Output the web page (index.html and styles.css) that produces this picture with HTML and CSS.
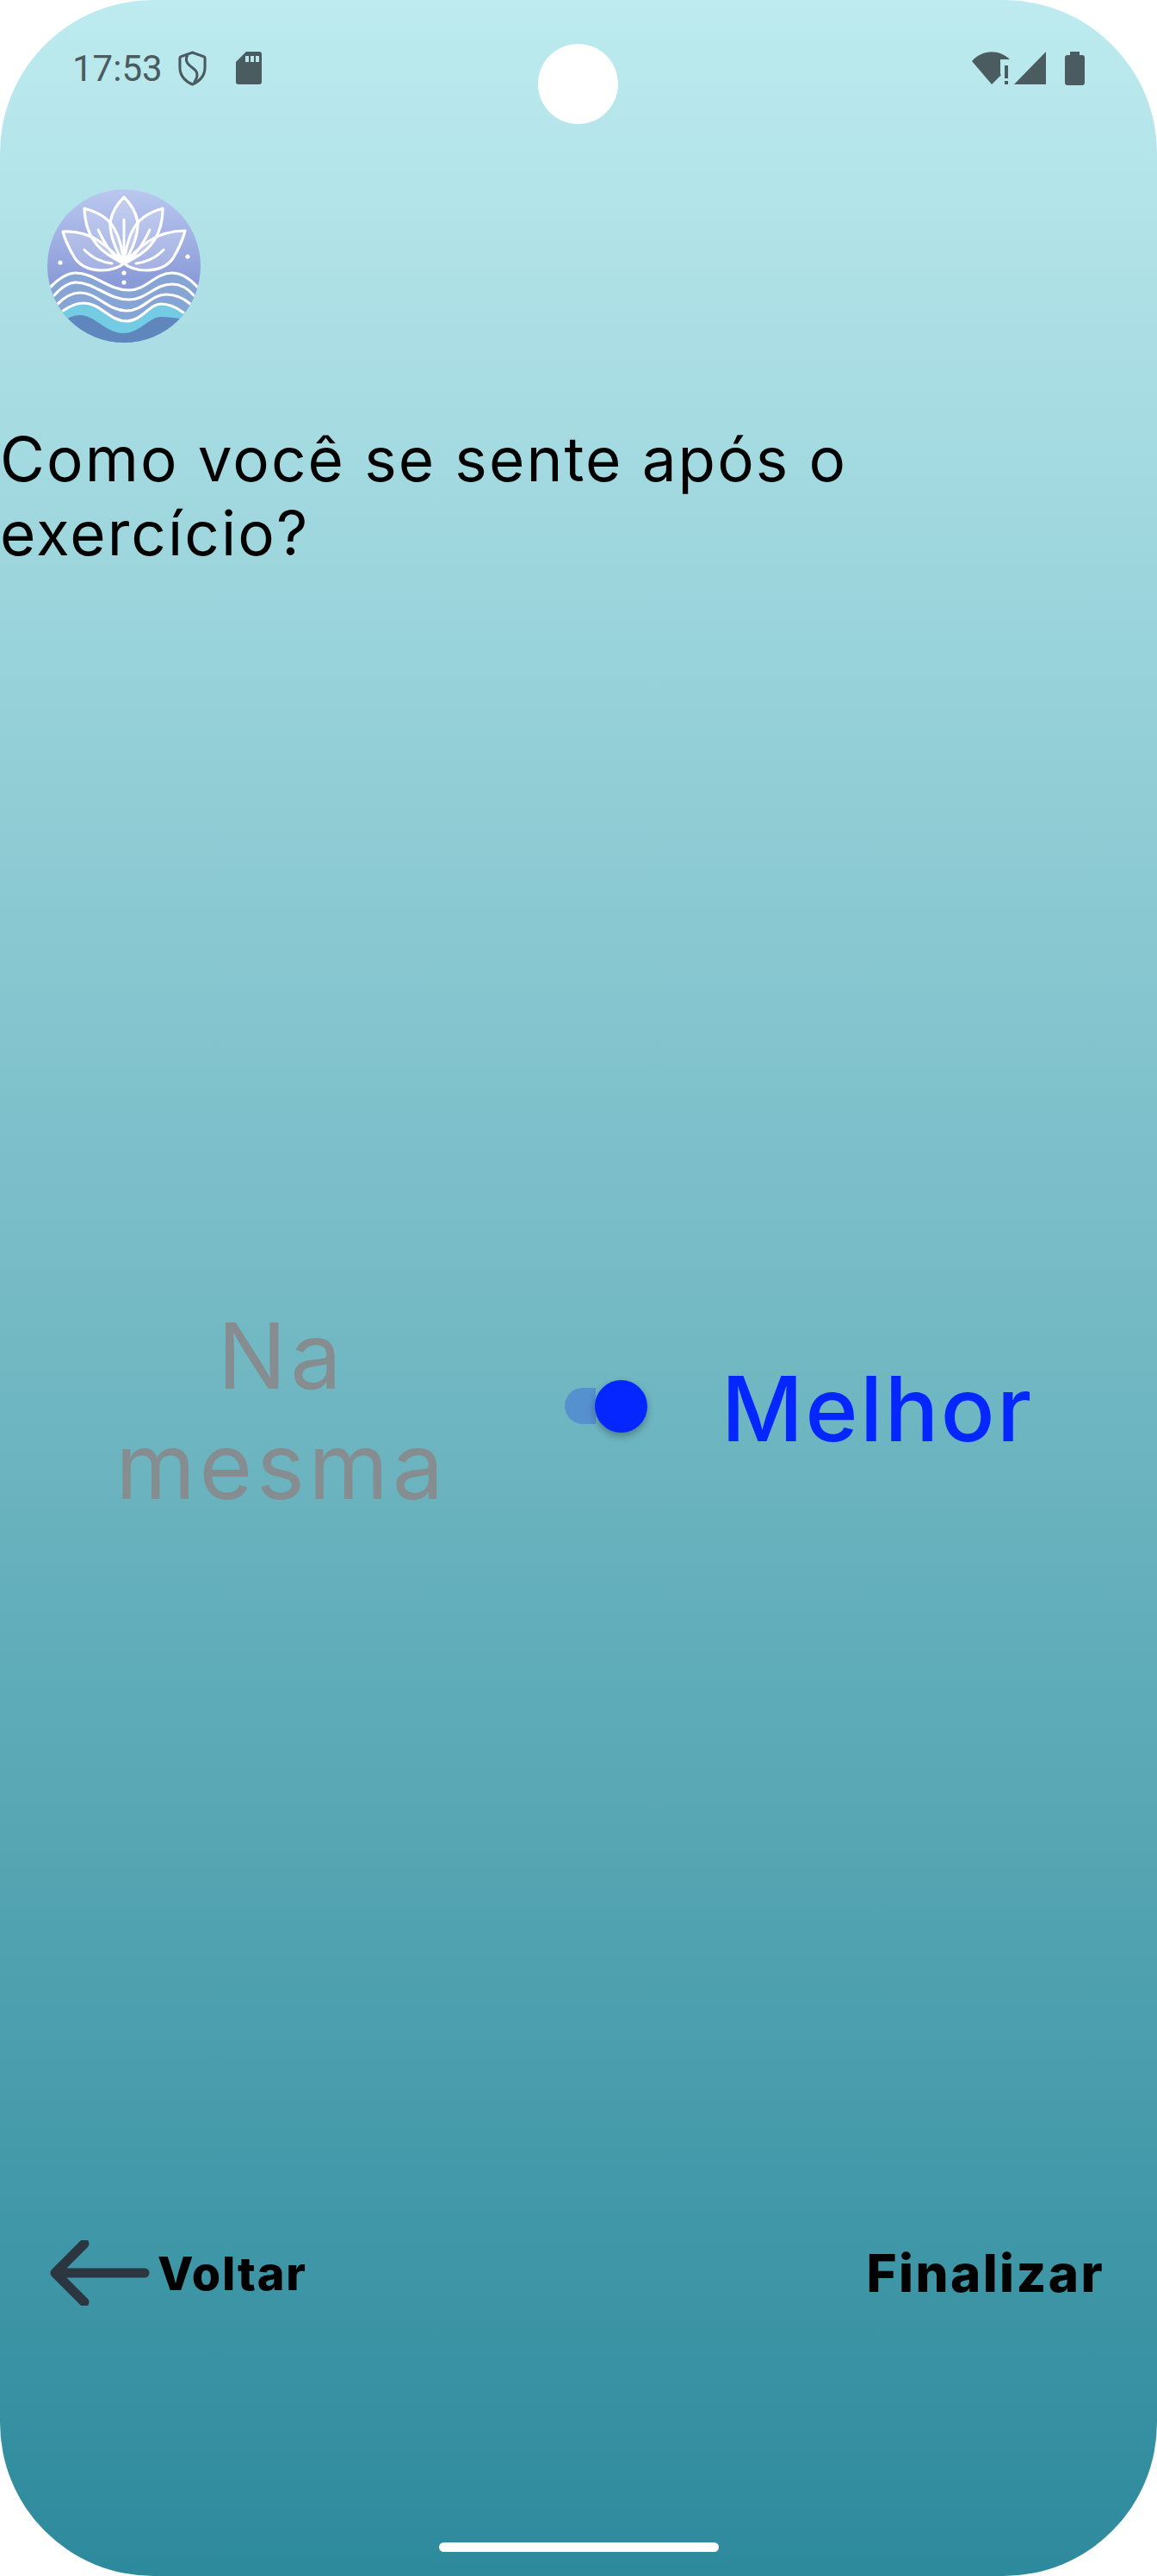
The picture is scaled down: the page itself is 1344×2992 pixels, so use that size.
FILE: index.html
```html
<!DOCTYPE html>
<html lang="en">
<head>
  <meta charset="UTF-8" />
  <title>Como você se sente</title>
  <link rel="stylesheet" href="styles.css">
</head>
<body>
  <div class="screen">
    <div class="camera"></div>

    <div class="status-bar">
      <div class="status-left">
        <span class="time">17:53</span>
        <svg class="shield" viewBox="0 0 34 42"><path d="M17 2 L31 7 Q32 7.500 32 9 V20 C32 30 25 37 17 40 C9 37 2 30 2 20 V9 Q2 7.500 3 7 Z" fill="none" stroke="#4a5c60" stroke-width="3.200" stroke-linejoin="round"/><path d="M11 5 C7 13 13 17 18 21 C24 25 24 31 19 38" fill="none" stroke="#4a5c60" stroke-width="3.200"/></svg>
        <svg class="sdcard" viewBox="0 0 30 38"><path d="M12 0 H27 Q30 0 30 3 V35 Q30 38 27 38 H3 Q0 38 0 35 V12 Z" fill="#4a5c60"/><path d="M11 5h4v7h-4zM17 5h4v7h-4zM23 5h4v7h-4z" fill="#bae8ec"/></svg>
      </div>
      <div class="status-right">
        <svg class="wifi" viewBox="0 0 44 38"><path d="M0 11 C12 -3 32 -3 44 9 L33 9 V26 L34 27 L23 38 Z" fill="#4a5c60"/><path d="M38 16h4v15h-4zM38 34h4v4h-4z" fill="#4a5c60"/></svg>
        <svg class="signal" viewBox="0 0 37 38"><path d="M37 0 V38 H0 Z" fill="#4a5c60"/></svg>
        <svg class="battery" viewBox="0 0 23 39"><path d="M6 0 H17 V4 H20 Q23 4 23 7 V36 Q23 39 20 39 H3 Q0 39 0 36 V7 Q0 4 3 4 H6 Z" fill="#4a5c60"/></svg>
      </div>
    </div>

    <svg class="logo" viewBox="0 0 178 178">
      <defs>
        <linearGradient id="disc" x1="0" y1="0" x2="0" y2="1">
          <stop offset="0" stop-color="#bac8ef"/>
          <stop offset="0.6" stop-color="#8b9bd8"/>
          <stop offset="1" stop-color="#7f9ccf"/>
        </linearGradient>
        <clipPath id="round"><circle cx="89" cy="89" r="89"/></clipPath>
      </defs>
      <circle cx="89" cy="89" r="89" fill="url(#disc)"/>
      <g clip-path="url(#round)">
        <path d="M4 113 C15 102 24 97 33 97 C55 97 70 117 95 117 C115 117 125 97 145 97 C155 97 165 103 174 113 L178 178 H0 Z" fill="#86a4d4"/>
        <path d="M18 141 C27 135 34 132 42 132 C62 132 72 153 92 153 C110 153 118 133 132 133 C142 133 150 137 158 143 L160 178 H10 Z" fill="#74cbe4"/>
        <path d="M25 149 C30 147 34 146 38 146 C55 146 68 167 88 167 C108 167 118 148 132 148 C140 148 147 149 153 150 L170 178 H8 Z" fill="#5f86bd"/>
        <g fill="none" stroke="#fff" stroke-width="3.200" stroke-linecap="round">
          <path d="M4 113 C15 102 24 97 33 97 C55 97 70 117 95 117 C115 117 125 97 145 97 C155 97 165 103 174 113"/>
          <path d="M8 123 C17 113 25 108 33 108 C55 108 70 128 95 128 C115 128 125 110 145 110 C155 110 163 115 170 123"/>
          <path d="M12 133 C20 125 29 120 38 120 C58 120 70 141 92 141 C112 141 120 122 138 122 C148 122 158 126 166 133"/>
          <path d="M18 141 C27 135 34 132 42 132 C62 132 72 153 92 153 C110 153 118 133 132 133 C142 133 150 137 158 143"/>
        </g>
        <g fill="rgba(255,255,255,0.18)" stroke="#fff" stroke-width="3.200" stroke-linejoin="round">
          <path d="M89 86 C75 97 45 98 32 80 C26 70 21 60 18 49 C35 48 48 52 60 60 C70 67 82 78 89 86 Z"/>
          <path d="M89 86 C103 97 133 98 146 80 C152 70 157 60 160 48 C143 48 130 52 118 60 C108 67 96 78 89 86 Z"/>
          <path d="M89 86 C65 75 44 60 43 22 C58 26 72 34 78 46 C85 58 87 72 89 86 Z"/>
          <path d="M89 86 C113 75 134 60 134 22 C120 26 106 34 100 46 C93 58 91 72 89 86 Z"/>
          <path d="M89 86 C78 68 73 52 73 40 C74 28 81 17 89 9 C97 17 104 28 105 40 C105 52 100 68 89 86 Z"/>
        </g>
        <g fill="none" stroke="#fff" stroke-width="3" stroke-linecap="round">
          <path d="M89 35 V85"/>
          <path d="M59 47 C65 60 72 72 84 84"/>
          <path d="M119 47 C113 60 106 72 94 84"/>
          <path d="M43 70 C52 80 65 85 75 86"/>
          <path d="M135 70 C126 80 113 85 103 86"/>
        </g>
        <g fill="#fff">
          <circle cx="15" cy="85" r="2.600"/><circle cx="163" cy="78" r="2.600"/>
          <circle cx="89" cy="97" r="2.600"/><circle cx="89" cy="108" r="2.600"/>
        </g>
      </g>
    </svg>

    <h1 class="question">Como você se sente após o exercício?</h1>

    <div class="choice">
      <div class="option-off">Na mesma</div>
      <div class="switch">
        <div class="switch-track"></div>
        <div class="switch-thumb"></div>
      </div>
      <div class="option-on">Melhor</div>
    </div>

    <div class="footer">
      <div class="back">
        <svg class="arrow" viewBox="0 0 116 76"><path d="M40 4 L6 38 L40 72 M6 38 H110" fill="none" stroke="#2b3640" stroke-width="11" stroke-linecap="round" stroke-linejoin="round"/></svg>
        <span class="back-label">Voltar</span>
      </div>
      <span class="finish">Finalizar</span>
    </div>

    <div class="home-bar"></div>
  </div>
</body>
</html>
```

FILE: styles.css
```css
html, body {
  margin: 0;
  padding: 0;
  background: #fff;
}

.screen {
  position: relative;
  width: 1344px;
  height: 2992px;
  box-sizing: border-box;
  border-radius: 178px;
  overflow: hidden;
  background: linear-gradient(to bottom, #bdebef 0%, #2d8a9c 100%);
  font-family: Inter, "Noto Sans", sans-serif;
  display: flex;
  flex-direction: column;
}

.camera {
  position: absolute;
  left: 625px;
  top: 51px;
  width: 93px;
  height: 93px;
  border-radius: 50%;
  background: #fff;
}

.status-bar {
  display: flex;
  justify-content: space-between;
  align-items: center;
  height: 40px;
  margin-top: 59px;
  padding: 0 84px;
}

.status-left,
.status-right {
  display: flex;
  align-items: center;
}

.time {
  font-family: Roboto, sans-serif;
  font-size: 42px;
  color: #4a5c60;
  width: 123px;
}

.shield {
  width: 33px;
  height: 41px;
  margin-right: 34px;
}

.sdcard {
  width: 30px;
  height: 38px;
}

.wifi {
  width: 44px;
  height: 38px;
}

.signal {
  width: 37px;
  height: 38px;
  margin-left: 5px;
  margin-right: 22px;
}

.battery {
  width: 23px;
  height: 39px;
}

.logo {
  display: block;
  width: 178px;
  height: 178px;
  margin: 121px 0 0 55px;
}

.question {
  margin: 92px 0 0 0;
  width: 1040px;
  font-size: 71px;
  font-weight: 400;
  letter-spacing: 2.100px;
  line-height: 86px;
  color: #000;
}

.choice {
  display: flex;
  align-items: center;
  margin-top: 849px;
}

.option-off {
  width: 400px;
  margin-left: 127px;
  text-align: center;
  font-size: 106px;
  font-weight: 400;
  letter-spacing: 4.500px;
  line-height: 128px;
  color: #868d90;
}

.switch {
  position: relative;
  width: 96px;
  height: 61px;
  margin-left: 129px;
  margin-bottom: 12px;
  display: flex;
  align-items: center;
}

.switch-track {
  width: 36px;
  height: 42px;
  border-radius: 21px 0 0 21px;
  background: #5590cf;
}

.switch-thumb {
  position: absolute;
  left: 35px;
  top: 0;
  width: 61px;
  height: 61px;
  border-radius: 50%;
  background: #0526ff;
  box-shadow: 0 4px 8px rgba(0, 0, 0, 0.3);
}

.option-on {
  margin-left: 86px;
  margin-bottom: 6px;
  font-size: 104px;
  font-weight: 500;
  letter-spacing: 2.500px;
  color: #0526ff;
}

.footer {
  display: flex;
  justify-content: space-between;
  align-items: center;
  margin-top: 835px;
  padding: 0 61px 0 58px;
}

.back {
  display: flex;
  align-items: center;
}

.arrow {
  width: 116px;
  height: 76px;
}

.back-label {
  margin-left: 9px;
  font-size: 54px;
  font-weight: 800;
  letter-spacing: 1.800px;
  color: #000;
}

.finish {
  font-size: 60px;
  font-weight: 800;
  letter-spacing: 2.400px;
  color: #000;
}

.home-bar {
  position: absolute;
  left: 510px;
  top: 2953px;
  width: 325px;
  height: 11px;
  border-radius: 6px;
  background: #fff;
}
```
